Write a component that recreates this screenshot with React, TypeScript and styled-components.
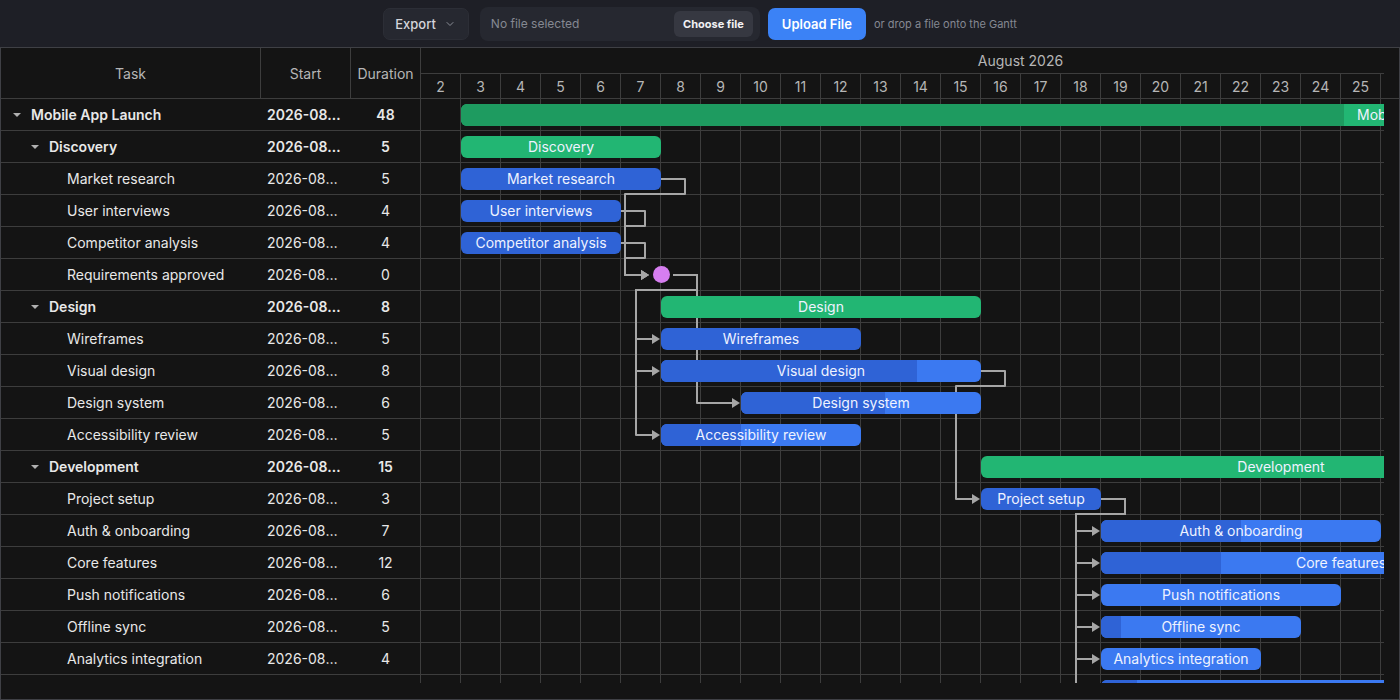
import React from 'react';
import styled, { createGlobalStyle } from 'styled-components';
import { ChevronDown } from 'lucide-react';

const GlobalStyle = createGlobalStyle`
  html, body {
    margin: 0;
    padding: 0;
    background: #1e1f26;
  }
  body {
    font-family: 'Inter', 'Noto Sans', sans-serif;
    -webkit-font-smoothing: antialiased;
  }
  * {
    box-sizing: border-box;
  }
`;

const DAY = 40;
const ROW = 32;
const LINE = '#3d3d3d';

type Kind = 'summary' | 'task' | 'milestone';

interface Task {
  id: string;
  name: string;
  level: number;
  start: number; // day of August 2026
  duration: number;
  type: Kind;
  progress: number;
}

const tasks: Task[] = [
  { id: 'launch', name: 'Mobile App Launch', level: 0, start: 3, duration: 48, type: 'summary', progress: 46 },
  { id: 'discovery', name: 'Discovery', level: 1, start: 3, duration: 5, type: 'summary', progress: 0 },
  { id: 'market', name: 'Market research', level: 2, start: 3, duration: 5, type: 'task', progress: 100 },
  { id: 'interviews', name: 'User interviews', level: 2, start: 3, duration: 4, type: 'task', progress: 100 },
  { id: 'competitor', name: 'Competitor analysis', level: 2, start: 3, duration: 4, type: 'task', progress: 100 },
  { id: 'req', name: 'Requirements approved', level: 2, start: 8, duration: 0, type: 'milestone', progress: 0 },
  { id: 'design', name: 'Design', level: 1, start: 8, duration: 8, type: 'summary', progress: 0 },
  { id: 'wireframes', name: 'Wireframes', level: 2, start: 8, duration: 5, type: 'task', progress: 100 },
  { id: 'visual', name: 'Visual design', level: 2, start: 8, duration: 8, type: 'task', progress: 80 },
  { id: 'system', name: 'Design system', level: 2, start: 10, duration: 6, type: 'task', progress: 60 },
  { id: 'a11y', name: 'Accessibility review', level: 2, start: 8, duration: 5, type: 'task', progress: 40 },
  { id: 'dev', name: 'Development', level: 1, start: 16, duration: 15, type: 'summary', progress: 0 },
  { id: 'setup', name: 'Project setup', level: 2, start: 16, duration: 3, type: 'task', progress: 100 },
  { id: 'auth', name: 'Auth & onboarding', level: 2, start: 19, duration: 7, type: 'task', progress: 50 },
  { id: 'core', name: 'Core features', level: 2, start: 19, duration: 12, type: 'task', progress: 25 },
  { id: 'push', name: 'Push notifications', level: 2, start: 19, duration: 6, type: 'task', progress: 0 },
  { id: 'offline', name: 'Offline sync', level: 2, start: 19, duration: 5, type: 'task', progress: 10 },
  { id: 'analytics', name: 'Analytics integration', level: 2, start: 19, duration: 4, type: 'task', progress: 0 },
  { id: 'api', name: 'API integration', level: 2, start: 19, duration: 10, type: 'task', progress: 9 },
];

const links: [string, string][] = [
  ['market', 'req'],
  ['interviews', 'req'],
  ['competitor', 'req'],
  ['req', 'wireframes'],
  ['req', 'visual'],
  ['req', 'system'],
  ['req', 'a11y'],
  ['visual', 'setup'],
  ['setup', 'auth'],
  ['setup', 'core'],
  ['setup', 'push'],
  ['setup', 'offline'],
  ['setup', 'analytics'],
  ['setup', 'api'],
];

const months = [
  { label: 'August 2026', days: Array.from({ length: 30 }, (_, i) => i + 2) },
  { label: 'September 2026', days: Array.from({ length: 25 }, (_, i) => i + 1) },
];
const totalDays = months.reduce((n, m) => n + m.days.length, 0);
const canvasWidth = totalDays * DAY;

const xOf = (day: number) => (day - 2) * DAY;
const pad = (n: number) => String(n).padStart(2, '0');

const Toolbar = styled.div`
  height: 47px;
  display: flex;
  align-items: center;
  justify-content: center;
  gap: 8px;
  background: #1e1f26;
`;

const ExportButton = styled.button`
  height: 32px;
  display: flex;
  align-items: center;
  gap: 8px;
  padding: 0 12px 0 11px;
  margin-right: 3px;
  background: #262830;
  border: 1px solid #2c2e36;
  border-radius: 7px;
  color: #d4d5da;
  font: 500 13px 'Inter', sans-serif;
`;

const FileBox = styled.div`
  width: 280px;
  height: 34px;
  display: flex;
  align-items: center;
  padding: 0 7px 0 11px;
  background: #262830;
  border-radius: 8px;
`;

const FileName = styled.span`
  flex: 1;
  font-size: 12px;
  color: #858892;
`;

const ChooseButton = styled.button`
  height: 26px;
  padding: 0 9px;
  background: #363841;
  border: none;
  border-radius: 6px;
  color: #f2f2f4;
  font: 700 11px 'Inter', sans-serif;
`;

const UploadButton = styled.button`
  height: 32px;
  padding: 0 14px;
  background: #3b82f6;
  border: none;
  border-radius: 7px;
  color: #ffffff;
  font: 600 13px 'Inter', sans-serif;
`;

const Hint = styled.span`
  font-size: 11px;
  color: #858892;
`;

const Gantt = styled.div`
  height: 653px;
  display: flex;
  flex-direction: column;
  border: 1px solid #3f4045;
  background: #141414;
  overflow: hidden;
`;

const HeaderRow = styled.div`
  height: 51px;
  display: flex;
  border-bottom: 1px solid ${LINE};
  flex-shrink: 0;
`;

const GridHead = styled.div`
  width: 420px;
  display: flex;
  flex-shrink: 0;
`;

const HeadCell = styled.div<{ $width: number }>`
  width: ${({ $width }) => $width}px;
  display: flex;
  align-items: center;
  justify-content: center;
  border-right: 1px solid ${LINE};
  color: #b6b6b6;
  font-size: 14px;
`;

const Viewport = styled.div`
  width: 963px;
  flex-shrink: 0;
  overflow: hidden;
`;

const ScaleCanvas = styled.div`
  display: flex;
  flex-direction: column;
  height: 100%;
`;

const ScaleLine = styled.div<{ $height: number; $border?: boolean }>`
  height: ${({ $height }) => $height}px;
  display: flex;
  border-bottom: ${({ $border }) => ($border ? `1px solid ${LINE}` : 'none')};
`;

const MonthCell = styled.div<{ $width: number }>`
  width: ${({ $width }) => $width}px;
  flex-shrink: 0;
  display: flex;
  align-items: center;
  justify-content: center;
  border-right: 1px solid ${LINE};
  color: #b6b6b6;
  font-size: 14px;
`;

const DayCell = styled.div`
  width: ${DAY}px;
  flex-shrink: 0;
  display: flex;
  align-items: center;
  justify-content: center;
  border-right: 1px solid ${LINE};
  color: #b6b6b6;
  font-size: 14px;
`;

const Gutter = styled.div`
  flex: 1;
`;

const Body = styled.div`
  height: 584px;
  display: flex;
  flex-shrink: 0;
  overflow: hidden;
`;

const GridPane = styled.div`
  width: 420px;
  flex-shrink: 0;
  border-right: 1px solid ${LINE};
  overflow: hidden;
`;

const GridRow = styled.div`
  height: ${ROW}px;
  display: flex;
  align-items: center;
  border-bottom: 1px solid ${LINE};
  color: #e8e8e8;
  font-size: 14px;
`;

const TaskCell = styled.div<{ $level: number; $bold: boolean }>`
  width: 260px;
  display: flex;
  align-items: center;
  gap: 6px;
  padding-left: ${({ $level }) => 8 + $level * 18}px;
  font-weight: ${({ $bold }) => ($bold ? 600 : 400)};
  white-space: nowrap;
`;

const Toggle = styled.span<{ $open: boolean }>`
  width: 16px;
  height: 16px;
  flex-shrink: 0;
  display: flex;
  align-items: center;
  justify-content: center;

  &::before {
    content: '';
    display: ${({ $open }) => ($open ? 'block' : 'none')};
    border-left: 4px solid transparent;
    border-right: 4px solid transparent;
    border-top: 4px solid #b0b0b0;
  }
`;

const StartCell = styled.div<{ $bold: boolean }>`
  width: 90px;
  padding: 0 9px 0 6px;
  overflow: hidden;
  white-space: nowrap;
  text-overflow: ellipsis;
  font-weight: ${({ $bold }) => ($bold ? 600 : 400)};
`;

const DurationCell = styled.div<{ $bold: boolean }>`
  width: 69px;
  text-align: center;
  font-weight: ${({ $bold }) => ($bold ? 600 : 400)};
`;

const ChartCanvas = styled.div`
  position: relative;
  isolation: isolate;
  background-image: linear-gradient(
    to right,
    transparent ${DAY - 1}px,
    ${LINE} ${DAY - 1}px,
    ${LINE} ${DAY}px
  );
  background-size: ${DAY}px 100%;
`;

const LinkLayer = styled.svg`
  position: absolute;
  top: 0;
  left: 0;
  z-index: 1;
  pointer-events: none;
`;

const ChartRow = styled.div`
  height: ${ROW}px;
  position: relative;
  border-bottom: 1px solid ${LINE};
`;

const Bar = styled.div<{ $kind: Kind }>`
  position: absolute;
  top: 5px;
  height: 22px;
  border-radius: 6px;
  overflow: hidden;
  z-index: 2;
  background: ${({ $kind }) => ($kind === 'summary' ? '#22b673' : '#3b79f1')};
`;

const Progress = styled.div<{ $kind: Kind }>`
  height: 100%;
  background: ${({ $kind }) => ($kind === 'summary' ? '#1e9b60' : '#2f63d6')};
`;

const BarLabel = styled.span`
  position: absolute;
  inset: 0;
  display: flex;
  align-items: center;
  justify-content: center;
  padding-bottom: 1px;
  white-space: nowrap;
  color: #eef2ff;
  font-size: 14px;
  font-weight: 400;
`;

const Milestone = styled.div`
  position: absolute;
  top: 7px;
  width: 17px;
  height: 17px;
  border-radius: 50%;
  background: #d67ef0;
  z-index: 2;
`;

const BottomGutter = styled.div`
  flex: 1;
`;

const rowOf = (id: string) => tasks.findIndex(t => t.id === id);

const linkPath = (fromId: string, toId: string) => {
  const a = tasks[rowOf(fromId)];
  const b = tasks[rowOf(toId)];
  const sy = rowOf(fromId) * ROW + 16;
  const ty = rowOf(toId) * ROW + 16;
  const sx = a.type === 'milestone' ? xOf(a.start) + 12 : xOf(a.start + a.duration);
  const tx = b.type === 'milestone' ? xOf(b.start) - 12 : xOf(b.start) - 1;
  const out = sx + 24;
  const line =
    tx - 24 >= out
      ? `M${sx},${sy} H${out} V${ty} H${tx - 8}`
      : `M${sx},${sy} H${out} V${sy + 15} H${tx - 24} V${ty} H${tx - 8}`;
  const arrow = `${tx - 8},${ty - 5} ${tx},${ty} ${tx - 8},${ty + 5}`;
  return { line, arrow };
};

const TaskBar: React.FC<{ task: Task }> = ({ task }) => {
  if (task.type === 'milestone') {
    return <Milestone style={{ left: xOf(task.start) - 8.5 }} />;
  }
  return (
    <Bar $kind={task.type} style={{ left: xOf(task.start), width: task.duration * DAY }}>
      <Progress $kind={task.type} style={{ width: `${task.progress}%` }} />
      <BarLabel>{task.name}</BarLabel>
    </Bar>
  );
};

export default function App() {
  return (
    <>
      <GlobalStyle />
      <Toolbar>
        <ExportButton>
          Export
          <ChevronDown size={12} color="#8a8d96" />
        </ExportButton>
        <FileBox>
          <FileName>No file selected</FileName>
          <ChooseButton>Choose file</ChooseButton>
        </FileBox>
        <UploadButton>Upload File</UploadButton>
        <Hint>or drop a file onto the Gantt</Hint>
      </Toolbar>

      <Gantt>
        <HeaderRow>
          <GridHead>
            <HeadCell $width={260}>Task</HeadCell>
            <HeadCell $width={90}>Start</HeadCell>
            <HeadCell $width={70}>Duration</HeadCell>
          </GridHead>
          <Viewport>
            <ScaleCanvas style={{ width: canvasWidth }}>
              <ScaleLine $height={26} $border>
                {months.map(m => (
                  <MonthCell key={m.label} $width={m.days.length * DAY}>
                    {m.label}
                  </MonthCell>
                ))}
              </ScaleLine>
              <ScaleLine $height={24}>
                {months.map(m =>
                  m.days.map(d => <DayCell key={`${m.label}-${d}`}>{d}</DayCell>)
                )}
              </ScaleLine>
            </ScaleCanvas>
          </Viewport>
          <Gutter />
        </HeaderRow>

        <Body>
          <GridPane>
            {tasks.map(t => {
              const bold = t.type === 'summary';
              return (
                <GridRow key={t.id}>
                  <TaskCell $level={t.level} $bold={bold}>
                    <Toggle $open={bold} />
                    {t.name}
                  </TaskCell>
                  <StartCell $bold={bold}>2026-08-{pad(t.start)}</StartCell>
                  <DurationCell $bold={bold}>{t.duration}</DurationCell>
                </GridRow>
              );
            })}
          </GridPane>
          <Viewport>
            <ChartCanvas style={{ width: canvasWidth, height: tasks.length * ROW }}>
              <LinkLayer width={canvasWidth} height={tasks.length * ROW}>
                {links.map(([from, to]) => {
                  const { line, arrow } = linkPath(from, to);
                  return (
                    <g key={`${from}-${to}`}>
                      <path
                        d={line}
                        fill="none"
                        stroke="#a6a6a6"
                        strokeWidth={2}
                        strokeLinejoin="round"
                      />
                      <polygon points={arrow} fill="#a6a6a6" />
                    </g>
                  );
                })}
              </LinkLayer>
              {tasks.map(t => (
                <ChartRow key={t.id}>
                  <TaskBar task={t} />
                </ChartRow>
              ))}
            </ChartCanvas>
          </Viewport>
          <Gutter />
        </Body>
        <BottomGutter />
      </Gantt>
    </>
  );
}
